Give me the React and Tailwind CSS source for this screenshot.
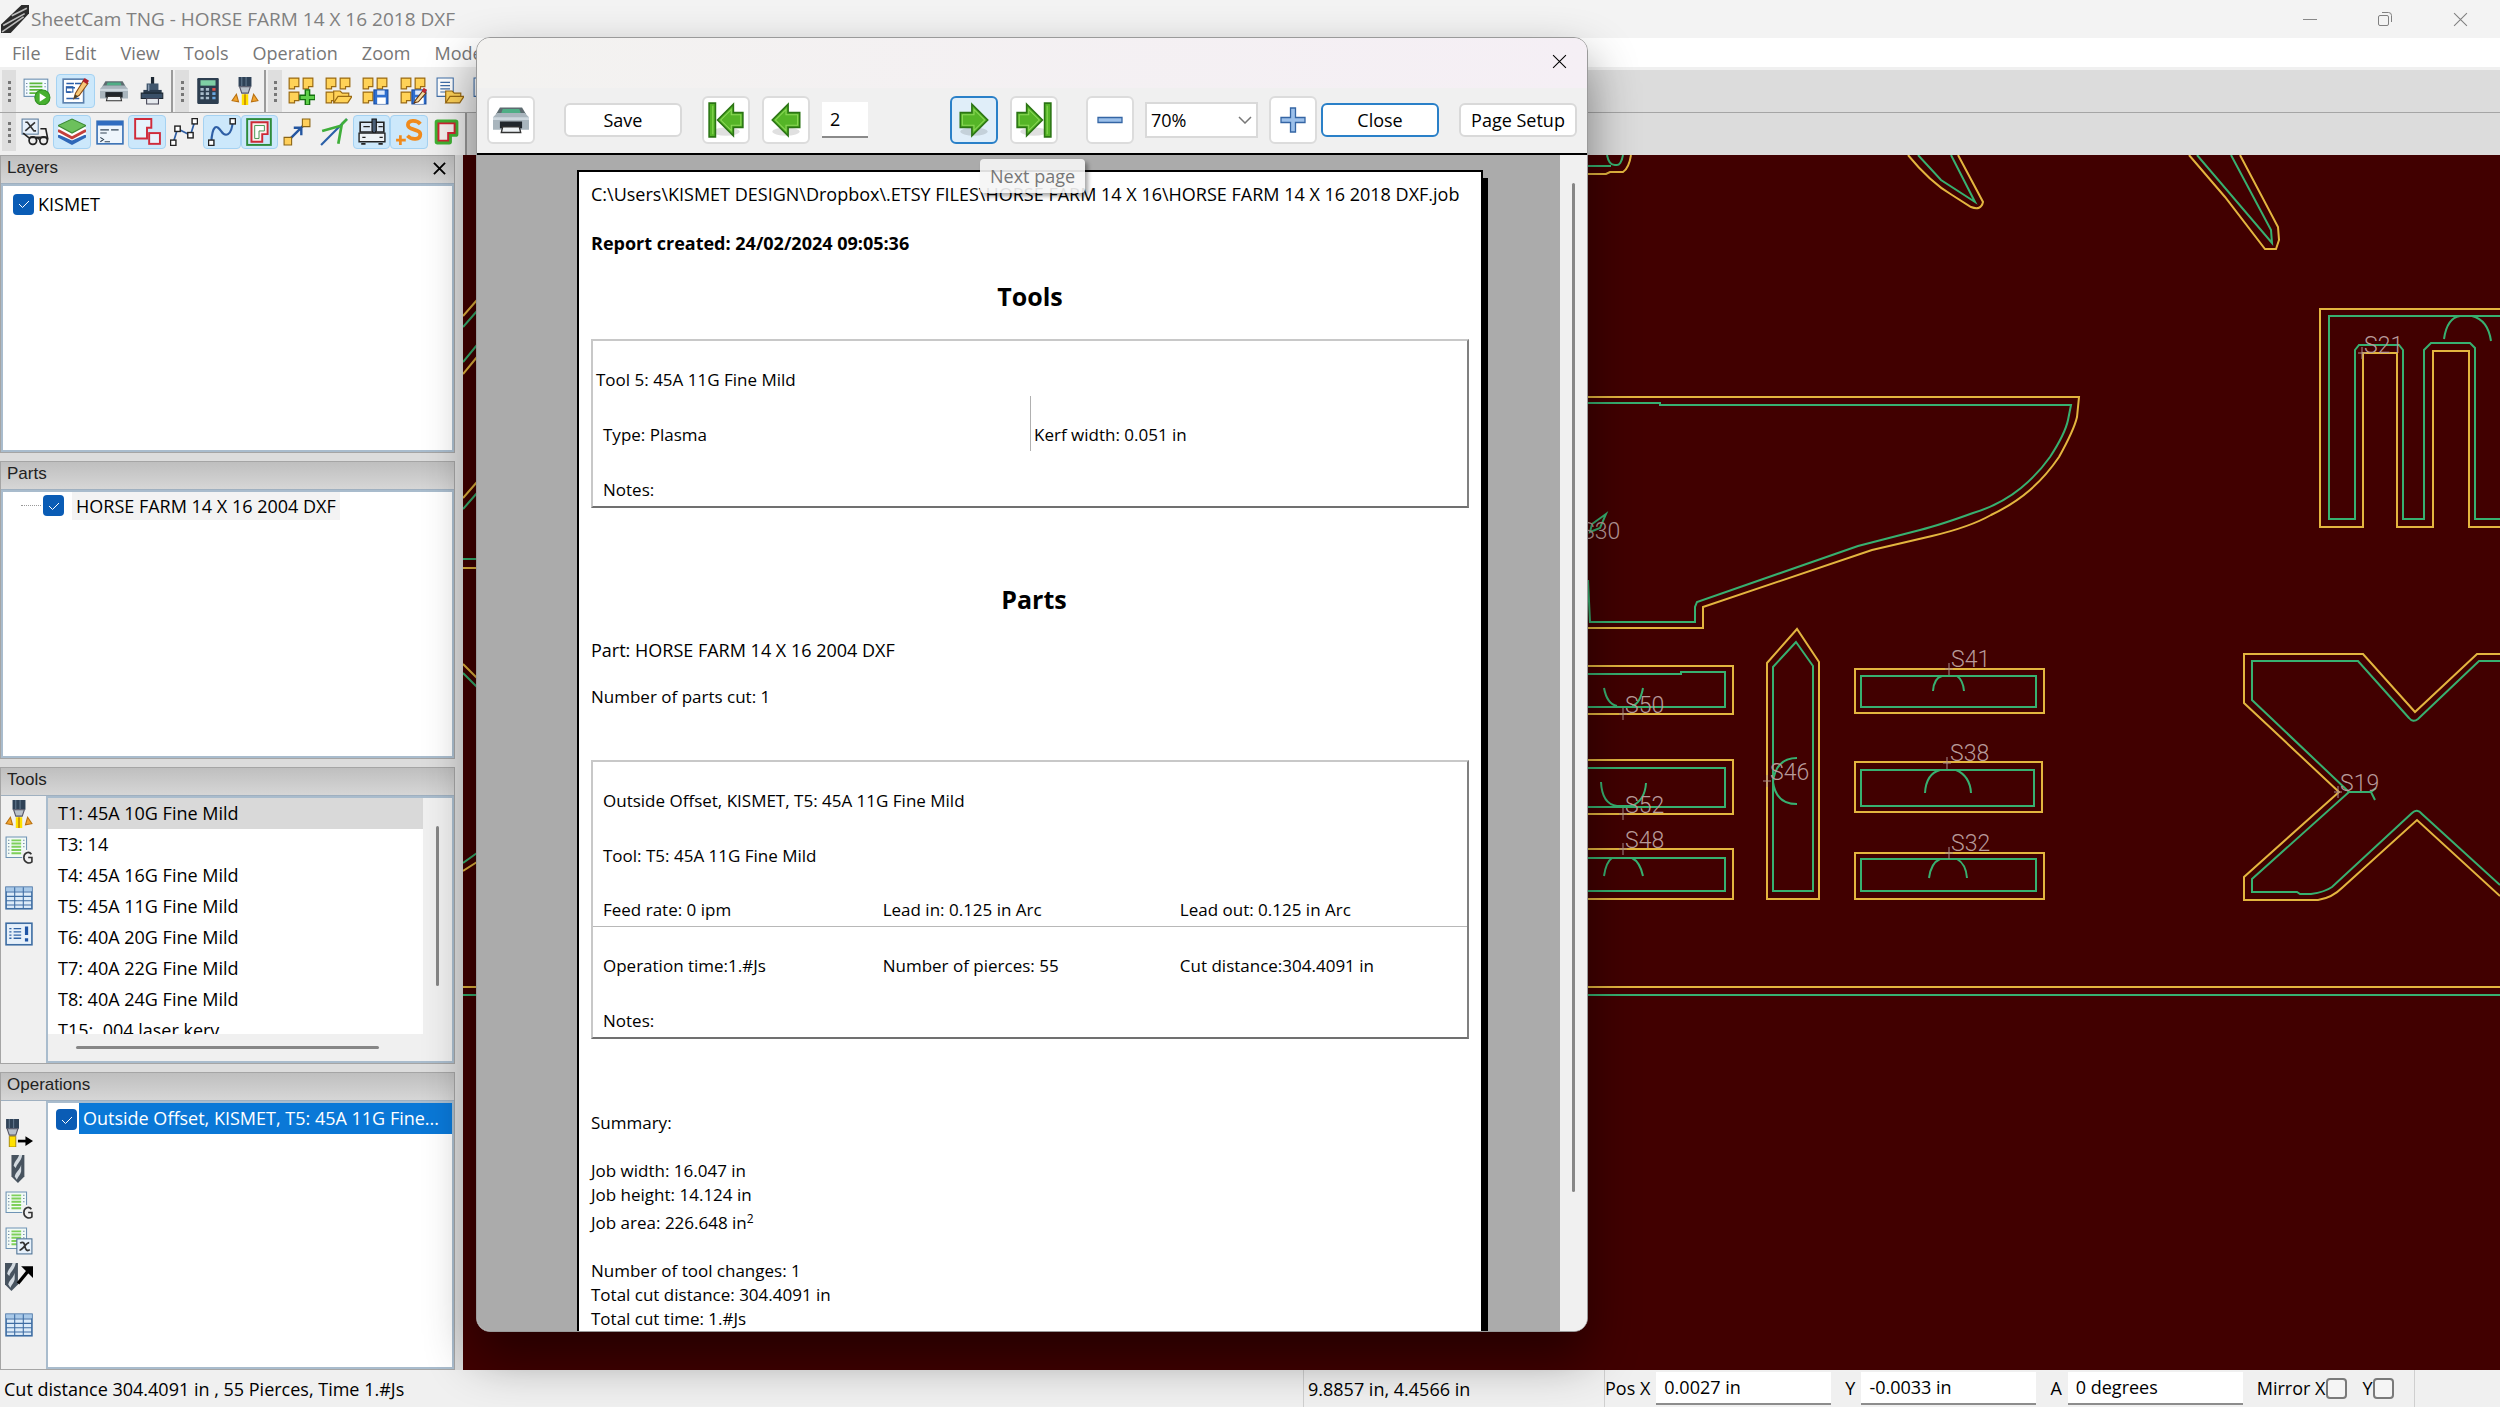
import React from "react";

const Icon = ({ children, className = "size-[28px]" }) => (
  <svg viewBox="0 0 26 26" className={className} fill="none" aria-hidden="true">
    {children}
  </svg>
);

/* ---------- icons ---------- */
const PostIcon = () => (
  <Icon>
    <rect x="1" y="2" width="22" height="16" fill="#f4fbff" stroke="#6b8fb0" />
    <path d="M6 6h12M6 9h12M6 12h12M6 15h8" stroke="#5cb83c" strokeWidth="1.6" />
    <path d="M3 6h1M3 9h1M3 12h1M3 15h1M20 6h1M20 9h1" stroke="#4a6a8a" />
    <circle cx="18" cy="19" r="7" fill="#46b02f" stroke="#2f8f20" />
    <path d="M15.500 15l6 4-6 4z" fill="#fff" />
  </Icon>
);
const EditIcon = () => (
  <Icon>
    <rect x="2" y="2" width="19" height="22" fill="#fff" stroke="#5b80ad" strokeWidth="1.500" />
    <path d="M5 6h7M13 6h6M5 14h4M5 20h12M5 10h8" stroke="#2a5ea8" strokeWidth="1.500" />
    <rect x="5" y="9" width="6" height="5" stroke="#2a5ea8" />
    <path d="M12 20l1.500-5L21 3l4 3-8 11z" fill="#f7c878" stroke="#8a4a10" />
    <path d="M20 4l2-3 4 2.500-2 3z" fill="#b3202c" />
    <path d="M12 20l1-4 3 2z" fill="#443" />
  </Icon>
);
const PrinterIcon = ({ className }) => (
  <Icon className={className}>
    <path d="M5 4h16l3 5H2z" fill="#5d6b70" />
    <path d="M7 5h12l1 3H6z" fill="#4fae86" />
    <path d="M3 8h20l3 3v9H0v-9z" fill="#a9b5bd" />
    <path d="M0 11h26v2H0z" fill="#cdd7de" />
    <path d="M5 14h16v5H5z" fill="#20262c" />
    <path d="M7 18h12l1 4H6z" fill="#eef2f5" stroke="#333" />
  </Icon>
);
const PlugIcon = () => (
  <Icon>
    <path d="M12 0h3v7h-3z" fill="#1d2833" />
    <path d="M8 6h11v7H8z" fill="#40566d" />
    <path d="M5 12h17v4H5z" fill="#2b3c4e" />
    <path d="M3 15h20v5H3z" fill="#3a5068" stroke="#1d2833" />
    <path d="M8 20h11v5H8z" fill="#e5e9ee" stroke="#445" />
    <path d="M10 7v6" stroke="#9fb2c6" />
  </Icon>
);
const CalcIcon = () => (
  <Icon>
    <rect x="3" y="1" width="20" height="24" rx="1" fill="#2d3e50" />
    <rect x="6" y="3" width="14" height="5" fill="#7fd0a5" />
    <path d="M6 11.500h3M11 11.500h3M6 15.500h3M11 15.500h3M6 19.500h3M11 19.500h3" stroke="#a9bccb" strokeWidth="2.500" />
    <path d="M17 11.500h3" stroke="#e0514b" strokeWidth="2.500" />
    <path d="M17 15.500h3M17 19.500h3" stroke="#6aa7e0" strokeWidth="2.500" />
  </Icon>
);
const TorchIcon = () => (
  <Icon>
    <path d="M7 0h12v9H7z" fill="#2f4257" />
    <path d="M10 0v9M14 0v9" stroke="#62788e" />
    <path d="M8 9h10l-2 6h-6z" fill="#b9c1ca" stroke="#556" />
    <path d="M10 16h6v10h-6z" fill="#ffe100" />
    <path d="M13 16v10" stroke="#c88a00" strokeWidth="1.500" />
    <path d="M5 16l2 7-6-1z" fill="#f3a52e" stroke="#b87010" />
    <path d="M21 16l-2 7 6-1z" fill="#f3a52e" stroke="#b87010" />
  </Icon>
);
const Tiles = ({ three }) => (
  <g fill="#ffd257" stroke="#9a6a12" strokeWidth="1.100">
    <path d="M2 1h9v8H7v2H2z" />
    <path d="M15 1h9v8h-4v2h-5z" />
    <path d="M2 14h9v8H7v2H2z" />
    {!three && <path d="M15 14h9v8h-4v2h-5z" />}
  </g>
);
const Folder = () => (
  <g fill="#ffd257" stroke="#9a6a12" strokeWidth="1.100">
    <path d="M9 24V13h6l2 2h6v4" />
    <path d="M9 24l4-6h13l-4 6z" />
  </g>
);
const Disk = () => (
  <g>
    <rect x="12" y="12" width="13" height="13" fill="#2e6fd0" stroke="#174a9c" />
    <path d="M15 12.500h7v4h-7z" fill="#dce9fb" />
    <path d="M15 19h8v6h-8z" fill="#fff" />
  </g>
);
const PartNewIcon = () => (
  <Icon>
    <Tiles three />
    <path d="M17 12h4v5h5v4h-5v5h-4v-5h-5v-4h5z" fill="#5fd04a" stroke="#14700f" strokeWidth="1.300" />
  </Icon>
);
const PartOpenIcon = () => (<Icon><Tiles three /><Folder /></Icon>);
const PartSaveIcon = () => (<Icon><Tiles three /><Disk /></Icon>);
const PartSaveAsIcon = () => (
  <Icon>
    <Tiles three />
    <Disk />
    <path d="M15 22l7-9 3 2-7 8-4 1z" fill="#f5dca0" stroke="#6b3a10" />
    <path d="M21 13l2-3 3 2-2 3z" fill="#c02a34" />
  </Icon>
);
const DocOpenIcon = () => (
  <Icon>
    <path d="M1 1h15v17H1z" fill="#fff" stroke="#3f6ea8" />
    <path d="M4 5h9M4 8h9M4 11h9M4 14h5" stroke="#3f6ea8" />
    <Folder />
  </Icon>
);
const GlassesIcon = () => (
  <Icon>
    <rect x="1" y="1" width="15" height="14" fill="#e7f0fa" stroke="#5f7f9f" />
    <path d="M4 4h2l6 8h2M13 4l-9 8" stroke="#333" strokeWidth="1.500" />
    <circle cx="11" cy="21" r="3.500" stroke="#222" strokeWidth="1.600" />
    <circle cx="21" cy="21" r="3.500" stroke="#222" strokeWidth="1.600" />
    <path d="M2 14l6 5M18 10h5l2 10M14 20c1-2 2-2 3 0M8 18h16" stroke="#222" strokeWidth="1.500" />
  </Icon>
);
const LayersIcon = () => (
  <Icon>
    <path d="M0 16l13-6 13 6v2l-13 7-13-7z" fill="#2f68b8" />
    <path d="M0 14l13-6 13 6v1l-13 6-13-6z" fill="#fff" />
    <path d="M0 11l13-6 13 6v2l-13 7-13-7z" fill="#c4403c" />
    <path d="M0 9l13-6 13 6v1l-13 7-13-7z" fill="#fff" />
    <path d="M0 7l13-6 13 6-13 7z" fill="#6cc05c" stroke="#3c8a34" />
  </Icon>
);
const ConsoleIcon = () => (
  <Icon>
    <rect x="1" y="3" width="24" height="21" fill="#eef5fc" stroke="#3970b5" strokeWidth="1.500" />
    <path d="M1 3h24v4H1z" fill="#2f6cc0" />
    <path d="M4 11h8M14 11h7M4 14h6M4 18l3 2-3 2M8 22h5" stroke="#345" />
  </Icon>
);
const ShapesIcon = () => (
  <Icon>
    <path d="M2 1h15v8h-4v10H2z" fill="#fff" fillOpacity=".5" stroke="#cf2b3b" strokeWidth="1.800" />
    <rect x="15" y="14" width="10" height="10" fill="#e8f2fd" stroke="#cf2b3b" strokeWidth="1.800" />
  </Icon>
);
const Nodes = ({ pts }) => pts.map(([x, y]) => (
  <rect key={`${x}-${y}`} x={x - 2.5} y={y - 2.5} width="5" height="5" fill="#fff" stroke="#222" strokeWidth="1.300" />
));
const PolylineIcon = () => (
  <Icon>
    <path d="M3 23L7 10l12 6 4-13" stroke="#2f5fa5" strokeWidth="1.600" />
    <Nodes pts={[[3, 23], [7, 10], [19, 16], [23, 3]]} />
  </Icon>
);
const CurveIcon = () => (
  <Icon>
    <path d="M3 23C4 6 8 6 12 12s10 5 11-9" stroke="#2f5fa5" strokeWidth="2" />
    <Nodes pts={[[3, 23], [23, 3]]} />
  </Icon>
);
const OffsetIcon = () => (
  <Icon>
    <rect x="2" y="1" width="22" height="24" stroke="#2d8c3c" strokeWidth="1.800" />
    <path d="M6 4h15v11h-5v7H6z" fill="#fdeeee" stroke="#cc2936" strokeWidth="1.800" />
    <path d="M9 7h9v5h-5v7H9z" fill="#fff" stroke="#2d8c3c" strokeWidth=".8" />
  </Icon>
);
const RapidIcon = () => (
  <Icon>
    <path d="M4 22L20 6M10 9l7 0v7" stroke="#2456a0" strokeWidth="2.200" />
    <path d="M1 18h7v7H1zM18 1h7v7h-7z" fill="#ffcf5a" stroke="#8a6414" />
  </Icon>
);
const DirectionIcon = () => (
  <Icon>
    <path d="M1 25L25 1" stroke="#2a5fa8" strokeWidth="2" />
    <path d="M2 12l18-5-3 17M20 6l5-5" stroke="#3fae3a" strokeWidth="2.500" />
  </Icon>
);
const MachineIcon = () => (
  <Icon>
    <path d="M2 4h22v9H2z" fill="#dce8f4" stroke="#222" strokeWidth="1.500" />
    <path d="M13 1v11l2 3 2-3V1z" fill="#4a5f78" stroke="#111" />
    <path d="M5 8h6M19 8h4" stroke="#222" />
    <path d="M1 14h24v8H1z" fill="#eef2f5" stroke="#222" strokeWidth="1.300" />
    <path d="M4 18h3M20 18h3" stroke="#222" strokeWidth="1.300" />
    <path d="M3 24h4M19 24h4" stroke="#222" strokeWidth="1.500" />
  </Icon>
);
const StartIcon = () => (
  <Icon>
    <path d="M5 16v9M1 20.500h9" stroke="#f08a1c" strokeWidth="2.500" />
    <path d="M23.500 5.500C20 1.500 12 1.500 12 6.500c0 5.500 11.500 3 11.500 8.500 0 5.500-8 5.500-12 1.500" stroke="#f08a1c" strokeWidth="3.500" />
  </Icon>
);
const KerfIcon = () => (
  <Icon>
    <path d="M5 4h17v11h-6v7H5z" fill="#2c8f23" stroke="#41b234" strokeWidth="5" strokeLinejoin="round" />
    <path d="M6 5h15v9h-6v7H6z" fill="#f5f0ee" stroke="#d02433" strokeWidth="1.800" />
  </Icon>
);
const CodeIcon = ({ letter }) => (
  <Icon>
    <path d="M1 1h19v19H1z" fill="#f2faf6" stroke="#6f94b5" />
    <path d="M6 4h9M6 7h9M6 10h9M6 13h9M6 16h9" stroke="#7ed05a" strokeWidth="1.700" />
    <path d="M3 4h1M3 7h1M3 10h1M3 13h1M3 16h1M17 4h1M17 7h1M17 10h1" stroke="#46658a" />
    {letter === "x" ? (
      <>
        <rect x="11" y="11" width="14" height="14" fill="#e7f1fb" stroke="#4f7396" />
        <path d="M14 15c3-2 4 0 4.500 3s2 5 4.500 3M22.500 14.500c-3 0-6 7-9 7" stroke="#333" strokeWidth="1.600" />
      </>
    ) : (
      <>
        <path d="M16 13h10v13H16z" fill="#f0f0f0" />
        <path d="M24.500 17c-2-3-7-2-7 3s5 6 7.500 4v-4h-3.500" stroke="#333" strokeWidth="1.500" />
      </>
    )}
  </Icon>
);
const TableIcon = () => (
  <Icon>
    <rect x="1" y="3" width="24" height="20" fill="#dcebf8" stroke="#3e6da3" strokeWidth="1.500" />
    <path d="M1 3h24v4H1z" fill="#a9c9e8" />
    <path d="M1 7.500h24M1 11.500h24M1 15.500h24M1 19.500h24M9 3v20M17 3v20" stroke="#3e6da3" />
  </Icon>
);
const InfoIcon = () => (
  <Icon>
    <rect x="1" y="3" width="24" height="20" fill="#e6f0fa" stroke="#3e6da3" strokeWidth="1.500" />
    <path d="M4 8h2M4 11h2M4 14h2M4 17h2M8 8h7M8 11h7M8 14h7M8 17h7" stroke="#2f62a5" strokeWidth="1.300" />
    <path d="M20 6v8M20 17v3" stroke="#1f55a5" strokeWidth="3" />
  </Icon>
);
const JetIcon = () => (
  <Icon>
    <path d="M1 0h12v9H1z" fill="#2f4257" />
    <path d="M4 0v9M8 0v9" stroke="#62788e" />
    <path d="M2 9h10l-2 6H4z" fill="#b9c1ca" stroke="#556" />
    <path d="M4 16h6v10H4z" fill="#ffe100" stroke="#a08000" strokeWidth=".8" />
    <path d="M12 20.500h9" stroke="#000" strokeWidth="2.500" />
    <path d="M19 16l7 4.500-7 4.500z" fill="#000" />
  </Icon>
);
const Drill = () => (
  <g>
    <path d="M0 0h12v20l-6 6-6-6z" fill="#47535f" />
    <path d="M2 10C3 5 6 4 7 0h3C9 6 5 8 4 12zM3 20c1-5 5-6 6-11v6c-1 4-3 5-4 8z" fill="#d3dae0" />
  </g>
);
const DrillIcon = () => (<Icon><g transform="translate(6 0)"><Drill /></g></Icon>);
const DrillMoveIcon = () => (
  <Icon>
    <Drill />
    <path d="M12 19L21 8" stroke="#000" strokeWidth="3" />
    <path d="M15 3h11v11z" fill="#000" />
  </Icon>
);
const LogoIcon = () => (
  <Icon>
    <path d="M0 18L19 0h7v8L9 26H0z" fill="#2c2c2c" />
    <path d="M2 19l20-11M1 25l20-14M10 10l14-7" stroke="#bdbdbd" strokeWidth="1.500" />
  </Icon>
);
const ArrowIcon = ({ flip, bar }) => (
  <svg viewBox="0 0 36 36" className="size-[38px]" fill="none" aria-hidden="true">
    <g transform={flip ? "translate(36 0) scale(-1 1)" : undefined}>
      <ellipse cx="18" cy="29" rx="13" ry="4" fill="#000" fillOpacity=".12" />
      {bar ? (
        <g fill="#55b527" stroke="#2b7414" strokeWidth="1.500">
          <path d="M2 11h9V3l15 15-15 15v-8H2z" />
          <path d="M28 2h6v32h-6z" />
          <path d="M4 13h9V8l10 10-10 10v-5H4zM30.500 4.500v27" stroke="#8cd858" strokeWidth="1" />
        </g>
      ) : (
        <g fill="#55b527" stroke="#2b7414" strokeWidth="1.500">
          <path d="M5 11h11V3l15 15-15 15v-8H5z" />
          <path d="M7 13h11V8l10 10-10 10v-5H7z" stroke="#8cd858" strokeWidth="1" />
        </g>
      )}
    </g>
  </svg>
);
const MinusIcon = () => (
  <Icon className="size-[26px]"><path d="M1 10.500h24v5H1z" fill="#9cc0ea" stroke="#3465a4" strokeWidth="1.300" /></Icon>
);
const PlusIcon = () => (
  <Icon className="size-[26px]">
    <path d="M10.500 1h5v9.500H25v5h-9.500V25h-5v-9.500H1v-5h9.500z" fill="#9cc0ea" stroke="#3465a4" strokeWidth="1.300" />
  </Icon>
);
const Cross = ({ className }) => (
  <svg viewBox="0 0 14 14" className={className} fill="none" stroke="currentColor" aria-hidden="true">
    <path d="M1 1l12 12M13 1L1 13" />
  </svg>
);

/* ---------- controls ---------- */
const ToolButton = ({ label, on, children }) => (
  <button
    aria-label={label}
    aria-pressed={on ? true : undefined}
    className={`grid h-[34px] min-w-0 flex-1 place-items-center rounded border ${on ? "border-[#a5d2f2] bg-[#cce8fb]" : "border-transparent"}`}
  >
    {children}
  </button>
);
const Grip = () => (
  <span className="flex w-[14px] flex-col items-center justify-center gap-[3px] self-stretch bg-[#dedede]">
    <i className="size-[3px] bg-[#777]" />
    <i className="size-[3px] bg-[#777]" />
    <i className="size-[3px] bg-[#777]" />
    <i className="size-[3px] bg-[#777]" />
  </span>
);
const Check = ({ id, label }) => (
  <span className="grid size-[21px] shrink-0 place-items-center">
    <input
      id={id}
      type="checkbox"
      defaultChecked
      aria-label={label}
      className="col-start-1 row-start-1 size-[21px] appearance-none rounded bg-[#0a5cb5]"
    />
    <svg viewBox="0 0 12 12" className="pointer-events-none col-start-1 row-start-1 size-[12px]" fill="none" stroke="#fff" aria-hidden="true">
      <path d="M1 6l3.500 3.500L11 3" />
    </svg>
  </span>
);
const Panel = ({ title, closable, children }) => (
  <section className="flex min-h-0 flex-col border border-[#a5a5a5]">
    <header className="flex h-[28px] shrink-0 items-start justify-between border-b border-[#9fb0c0] bg-gradient-to-b from-[#bfbfbf] to-[#d6d6d6] px-1.5">
      <h2 className="font-['Liberation_Sans',sans-serif] text-[17px] leading-[24px] text-[#222]">{title}</h2>
      {closable && (
        <button aria-label="Close panel" className="mt-1.5 mr-0.5 text-black">
          <Cross className="size-[13px] stroke-2" />
        </button>
      )}
    </header>
    {children}
  </section>
);
const listBox = "flex min-h-0 min-w-0 flex-1 border-2 border-[#a9bccd] bg-white";

const reportButton = "grid h-[48px] w-[48px] shrink-0 place-items-center rounded-md border-2 border-[#dcdcdc] bg-white";
const textButton = "h-[34px] w-[118px] shrink-0 rounded-md border-2 border-[#d9d9d9] bg-white text-[18px] leading-[24px] whitespace-nowrap text-black";

const tools = [
  "T1: 45A 10G Fine Mild", "T3: 14", "T4: 45A 16G Fine Mild", "T5: 45A 11G Fine Mild",
  "T6: 40A 20G Fine Mild", "T7: 40A 22G Fine Mild", "T8: 40A 24G Fine Mild", "T15: .004 laser kerv",
];
const menus = ["File", "Edit", "View", "Tools", "Operation", "Zoom", "Mode"];

/* ---------- drawing area ---------- */
const cutPaths = [
  "M1588 174H1606L1610 172H1623Q1629 168 1631 155",
  "M1908 155Q1930 182 1952 195L1971 207Q1981 211 1983 202L1974 185L1958 155",
  "M2189 155L2225 197L2265 249H2276L2279 240L2278 227L2240 155",
  "M2500 309H2320V527H2363V353H2397V527H2433V351H2469V527H2500",
  "M1588 397H2079L2077 417Q2074 430 2059 457Q2046 476 2030 490Q2014 504 1991 515Q1970 527 1932 536L1872 550L1703 607V628H1588",
  "M1588 666H1733V714H1588M1588 760H1733V814H1588M1588 849H1733V899H1588",
  "M1797 629L1767 663V899H1819V662Z",
  "M1855 669H2044V713H1855ZM1855 762H2042V812H1855ZM1855 853H2044V899H1855Z",
  "M2500 654H2477L2415 712L2363 654H2244V703L2339 792L2244 877V900H2318Q2332 898 2343 887L2417 820L2500 896",
  "M463 987H2500",
  "M463 316L477 300M463 374L477 357M463 498L477 482M463 568H477M463 664L477 678M463 871L477 862",
];
const toolPaths = [
  "M1588 166H1611M1607 155Q1609 166 1616 165Q1621 166 1623 155",
  "M1918 155L1941 180L1975 202L1951 155",
  "M2197 155L2272 243L2271 230L2231 155",
  "M2500 316H2329V519H2355V350L2359 345H2399L2403 350V519H2424V350L2431 343H2470L2475 348V519H2500",
  "M2444 339Q2447 318 2460 316H2472Q2488 320 2491 341",
  "M1588 403H1660V405H2071L2068 420Q2065 434 2050 457Q2038 474 2021 488Q2000 505 1973 513Q1940 525 1920 530L1858 546L1697 602L1695 607V622H1590L1588 580",
  "M1606 514L1592 524L1590 532L1600 528Z",
  "M1588 674H1681V672H1725V707H1588M1588 768H1725V807H1588M1588 858H1725V891H1588",
  "M1604 688Q1607 704 1617 706M1643 688Q1640 704 1632 706M1601 782Q1602 804 1617 806H1632Q1645 800 1646 783M1604 876Q1606 862 1612 858M1632 858Q1640 862 1643 876",
  "M1796 642L1773 667V891H1813V666Z",
  "M1797 758Q1776 758 1773 782Q1776 804 1797 804",
  "M1861 676H2036V707H1861ZM1861 770H2034V806H1861ZM1861 859H2036V891H1861Z",
  "M1933 691Q1934 678 1942 676M1957 676Q1963 680 1964 691M1925 793Q1926 774 1940 770H1956Q1970 776 1971 793M1929 878Q1931 863 1940 859M1957 859Q1966 864 1967 878",
  "M2500 661H2479L2418 719Q2413 723 2409 718L2358 661H2252V700L2349 792L2252 879V892H2297L2300 894H2311Q2325 892 2332 887L2412 813Q2417 808 2422 814L2500 885",
  "M2349 792H2371L2375 800M2371 792L2376 788",
  "M463 995H2500",
  "M463 327L477 311M463 362L477 345M463 509L477 493M463 559H477M463 673L477 687M463 863L477 853",
];
const starts = [
  ["S21", 2364, 353, 2362, 353], ["S30", 1581, 539, 1579, 541], ["S50", 1625, 713, 1623, 714],
  ["S52", 1625, 813, 1623, 814], ["S48", 1625, 848, 1623, 849], ["S46", 1770, 780, 1767, 781],
  ["S41", 1951, 667, 1949, 669], ["S38", 1950, 761, 1947, 763], ["S32", 1951, 851, 1949, 853],
  ["S19", 2340, 791, 2338, 792],
];

const Drawing = () => (
  <svg
    viewBox="463 155 2037 1215"
    preserveAspectRatio="xMinYMin slice"
    className="h-full w-full bg-[#410000]"
    fill="none"
    role="img"
    aria-label="Cutting paths"
  >
    <g stroke="#e3b53f" strokeWidth="2">
      {cutPaths.map((d) => <path key={d} d={d} />)}
    </g>
    <g stroke="#37b070" strokeWidth="2">
      {toolPaths.map((d) => <path key={d} d={d} />)}
    </g>
    {starts.map(([name, x, y, cx, cy]) => (
      <g key={name}>
        <text x={x} y={y} fontSize="23" fontWeight="300" fontFamily="Roboto, sans-serif" fill="#b79a9a">{name}</text>
        <path d={`M${cx} ${cy - 6}v12M${cx - 4} ${cy}h8`} stroke="#a88c8c" />
      </g>
    ))}
  </svg>
);

/* ---------- report preview ---------- */
const tableBox = "w-full border-separate border-spacing-0 border-2 border-t-[#c8c8c8] border-r-[#808080] border-b-[#707070] border-l-[#c8c8c8]";
const cell = "h-[55px] px-2.5 pb-1 text-left align-bottom font-normal";

const ReportPage = () => (
  <article className="mt-[15px] mr-[77px] ml-[100px] flex-1 border-2 border-b-0 border-black bg-white px-3 pt-2.5 text-[17px] leading-[24px] text-black shadow-[5px_8px_0_#000]">
    <p className="text-[18px] whitespace-nowrap">C:\Users\KISMET DESIGN\Dropbox\.ETSY FILES\HORSE FARM 14 X 16\HORSE FARM 14 X 16 2018 DXF.job</p>
    <p className="mt-[25px] text-[18px] font-bold">Report created: 24/02/2024 09:05:36</p>
    <h1 className="mt-[25px] text-center text-[25px] leading-[32px] font-bold">Tools</h1>
    <table className={`${tableBox} mt-[27px] table-fixed`}>
      <tbody>
        <tr><th colSpan={2} className="h-[55px] px-[3px] pb-1 text-left align-bottom font-normal">Tool 5: 45A 11G Fine Mild</th></tr>
        <tr><td className={cell}>Type: Plasma</td><td className="h-[55px] border-l border-[#b0b0b0] px-[3px] pb-1 align-bottom">Kerf width: 0.051 in</td></tr>
        <tr><td colSpan={2} className={cell}>Notes:</td></tr>
      </tbody>
    </table>
    <h1 className="mt-[75px] pl-2 text-center text-[25px] leading-[32px] font-bold">Parts</h1>
    <p className="mt-[23px] text-[18px]">Part: HORSE FARM 14 X 16 2004 DXF</p>
    <p className="mt-[23px]">Number of parts cut: 1</p>
    <table className={`${tableBox} mt-[51px] table-fixed`}>
      <colgroup><col className="w-[32%]" /><col className="w-[34%]" /><col className="w-[34%]" /></colgroup>
      <tbody>
        <tr><th colSpan={3} className={cell}>Outside Offset, KISMET, T5: 45A 11G Fine Mild</th></tr>
        <tr><td colSpan={3} className={cell}>Tool: T5: 45A 11G Fine Mild</td></tr>
        <tr>
          <td className={`${cell} border-b border-[#b8b8b8]`}>Feed rate: 0 ipm</td>
          <td className={`${cell} border-b border-[#b8b8b8]`}>Lead in: 0.125 in Arc</td>
          <td className={`${cell} border-b border-[#b8b8b8]`}>Lead out: 0.125 in Arc</td>
        </tr>
        <tr>
          <td className={cell}>Operation time:1.#Js</td>
          <td className={cell}>Number of pierces: 55</td>
          <td className={cell}>Cut distance:304.4091 in</td>
        </tr>
        <tr><td colSpan={3} className={cell}>Notes:</td></tr>
      </tbody>
    </table>
    <p className="mt-[72px]">Summary:</p>
    <p className="mt-6">Job width: 16.047 in</p>
    <p>Job height: 14.124 in</p>
    <p className="mt-1">Job area: 226.648 in<sup className="text-[12px] leading-none">2</sup></p>
    <p className="mt-6">Number of tool changes: 1</p>
    <p>Total cut distance: 304.4091 in</p>
    <p>Total cut time: 1.#Js</p>
  </article>
);

const ReportDialog = () => (
  <div
    role="dialog"
    aria-label="Report preview"
    className="absolute top-[37px] bottom-[75px] left-[476px] flex w-[1112px] flex-col overflow-hidden rounded-[14px] border border-[#9a9a9a] bg-[#f0f0f0] shadow-[0_24px_50px_rgba(0,0,0,0.45)]"
  >
    <header className="flex h-[50px] shrink-0 items-start justify-end bg-gradient-to-r from-[#f3f2f0] to-[#f5eff5] pt-4 pr-5">
      <button aria-label="Close window" className="text-black"><Cross className="size-[15px]" /></button>
    </header>
    <div className="flex h-[67px] shrink-0 items-center border-b-2 border-black pb-0.5 pl-2.5">
      <button aria-label="Print" className={reportButton}><PrinterIcon className="size-[36px]" /></button>
      <button className={`${textButton} ml-[29px]`}>Save</button>
      <div className="ml-5 flex items-center gap-3">
        <button aria-label="First page" className={reportButton}><ArrowIcon flip bar /></button>
        <button aria-label="Previous page" className={reportButton}><ArrowIcon flip /></button>
        <input aria-label="Page number" defaultValue="2" className="h-[36px] w-[46px] border-b-2 border-[#8a8a8a] bg-white px-2 text-[18px] text-black" />
      </div>
      <div className="ml-[82px] flex items-center gap-3">
        <button aria-label="Next page" className="grid h-[48px] w-[48px] shrink-0 place-items-center rounded-md border-2 border-[#2a80c8] bg-[#e0eef9]"><ArrowIcon /></button>
        <button aria-label="Last page" className={reportButton}><ArrowIcon bar /></button>
      </div>
      <div className="ml-7 flex items-center gap-[11px]">
        <button aria-label="Zoom out" className={reportButton}><MinusIcon /></button>
        <span className="grid w-[113px] items-center">
          <select aria-label="Zoom level" defaultValue="70%" className="col-start-1 row-start-1 h-[36px] appearance-none border-2 border-[#d9d9d9] bg-white px-1 text-[18px] text-black">
            <option>70%</option>
          </select>
          <svg viewBox="0 0 14 8" className="pointer-events-none col-start-1 row-start-1 mr-1.5 w-[14px] justify-self-end" fill="none" stroke="#777" strokeWidth="1.500" aria-hidden="true">
            <path d="M1 1l6 6 6-6" />
          </svg>
        </span>
        <button aria-label="Zoom in" className={reportButton}><PlusIcon /></button>
      </div>
      <button className="ml-1 h-[34px] w-[118px] shrink-0 rounded-md border-2 border-[#2a80c8] bg-white text-[18px] leading-[24px] text-black">Close</button>
      <button className={`${textButton} ml-5`}>Page Setup</button>
    </div>
    <div className="flex min-h-0 flex-1">
      <div className="flex min-w-0 flex-1 flex-col overflow-hidden bg-[#ababab]">
        <ReportPage />
      </div>
      <div className="flex w-[27px] justify-center bg-[#f0f0f0] pt-7">
        <span className="h-[1009px] w-[3px] rounded bg-[#868686]" />
      </div>
    </div>
    <div role="tooltip" className="absolute top-[121px] left-[503px] rounded-sm bg-[#f5f5f5]/90 px-2.5 py-1 text-[18px] leading-[26px] text-[#777] shadow-[3px_3px_4px_rgba(0,0,0,0.35)]">
      Next page
    </div>
  </div>
);

const statusInput = "ml-1.5 h-[33px] w-[175px] border-b-2 border-[#8d8d8d] bg-white px-2 text-[18px] text-black";
const mirrorBox = "size-[21px] appearance-none rounded border-2 border-[#7a7a7a] bg-[#f5f5f5]";

export default function App() {
  return (
    <div className="relative flex h-screen flex-col overflow-hidden bg-[#dcdcdc] font-['Open_Sans','Noto_Sans',sans-serif] text-[18px] leading-[24px] text-black">
      <header className="flex h-[38px] shrink-0 items-center bg-[#f3f3f3] pl-px text-[#808080]">
        <LogoIcon />
        <h1 className="ml-0.5 text-[19px]">SheetCam TNG - HORSE FARM 14 X 16 2018 DXF</h1>
        <div className="mr-8 ml-auto flex items-center gap-[61px]">
          <button aria-label="Minimize" className="h-[14px] w-[14px]"><span className="block h-px w-full bg-[#888]" /></button>
          <button aria-label="Restore">
            <svg viewBox="0 0 14 14" className="size-[14px]" fill="none" stroke="currentColor" aria-hidden="true">
              <rect x=".5" y="3.500" width="10" height="10" rx="1.500" />
              <path d="M4 .5h6.500a3 3 0 013 3V10" />
            </svg>
          </button>
          <button aria-label="Close"><Cross className="size-[15px]" /></button>
        </div>
      </header>

      <nav className="flex h-[32px] shrink-0 items-center gap-6 border-b-[3px] border-[#f0f0f0] bg-white pl-3 text-[#777]">
        {menus.map((m) => <button key={m}>{m}</button>)}
      </nav>

      <div className="flex h-[43px] shrink-0 border-b border-[#a5a5a5]" role="toolbar" aria-label="File tools">
        <div className="flex w-[173px] items-center border-r-2 border-[#9b9b9b] bg-[#f0f0f0] pl-0.5">
          <Grip />
          <div className="flex min-w-0 flex-1 pl-0.5">
            <ToolButton label="Run post"><PostIcon /></ToolButton>
            <ToolButton label="Edit job options" on><EditIcon /></ToolButton>
            <ToolButton label="Print"><PrinterIcon /></ToolButton>
            <ToolButton label="Machine"><PlugIcon /></ToolButton>
          </div>
        </div>
        <div className="flex w-[93px] items-center border-r-2 border-[#9b9b9b] bg-[#f0f0f0] pl-0.5">
          <Grip />
          <ToolButton label="Calculator"><CalcIcon /></ToolButton>
          <ToolButton label="Plasma tool"><TorchIcon /></ToolButton>
        </div>
        <div className="flex w-[240px] items-center bg-[#f0f0f0] pl-0.5">
          <Grip />
          <ToolButton label="New part"><PartNewIcon /></ToolButton>
          <ToolButton label="Open part"><PartOpenIcon /></ToolButton>
          <ToolButton label="Save part"><PartSaveIcon /></ToolButton>
          <ToolButton label="Save part as"><PartSaveAsIcon /></ToolButton>
          <ToolButton label="Open drawing"><DocOpenIcon /></ToolButton>
          <ToolButton label="Open code"><DocOpenIcon /></ToolButton>
        </div>
      </div>

      <div className="flex h-[42px] shrink-0" role="toolbar" aria-label="View tools">
        <div className="flex w-[467px] items-center border-r-2 border-[#9b9b9b] bg-[#f0f0f0] pb-1 pl-0.5">
          <Grip />
          <ToolButton label="Variables"><GlassesIcon /></ToolButton>
          <ToolButton label="Show layers" on><LayersIcon /></ToolButton>
          <ToolButton label="Console"><ConsoleIcon /></ToolButton>
          <ToolButton label="Show parts" on><ShapesIcon /></ToolButton>
          <ToolButton label="Show nodes"><PolylineIcon /></ToolButton>
          <ToolButton label="Show curves" on><CurveIcon /></ToolButton>
          <ToolButton label="Show offsets" on><OffsetIcon /></ToolButton>
          <ToolButton label="Show rapids"><RapidIcon /></ToolButton>
          <ToolButton label="Show directions"><DirectionIcon /></ToolButton>
          <ToolButton label="Show machine" on><MachineIcon /></ToolButton>
          <ToolButton label="Show start points" on><StartIcon /></ToolButton>
          <ToolButton label="Show kerf"><KerfIcon /></ToolButton>
        </div>
      </div>

      <main className="flex min-h-0 flex-1">
        <aside className="mr-2 grid w-[455px] shrink-0 grid-rows-4 gap-2">
          <Panel title="Layers" closable>
            <div className={`${listBox} items-start px-2.5 pt-1.5`}>
              <label htmlFor="layer-kismet" className="flex items-center gap-1"><Check id="layer-kismet" />KISMET</label>
            </div>
          </Panel>
          <Panel title="Parts">
            <div className={`${listBox} items-start px-1`}>
              <label htmlFor="part-horse" className="flex items-center pl-3.5">
                <span className="w-[20px] border-t border-dotted border-[#999]" />
                <span className="ml-0.5"><Check id="part-horse" /></span>
                <span className="ml-2 bg-[#f3f3f3] px-1 leading-[28px]">HORSE FARM 14 X 16 2004 DXF</span>
              </label>
            </div>
          </Panel>
          <Panel title="Tools">
            <div className="flex min-h-0 flex-1">
              <div className="flex w-[45px] shrink-0 flex-col items-start gap-2 bg-[#f0f0f0] pt-1 pl-1">
                <button aria-label="New plasma tool"><TorchIcon /></button>
                <button aria-label="New code tool"><CodeIcon letter="G" /></button>
                <button aria-label="Tool table" className="mt-3"><TableIcon /></button>
                <button aria-label="Tool info"><InfoIcon /></button>
              </div>
              <div className={listBox}>
                <div className="flex min-w-0 flex-1 flex-col">
                  <ul className="min-h-0 flex-1 overflow-hidden">
                    {tools.map((t, i) => (
                      <li key={t} className={`h-[31px] pl-2.5 leading-[31px] ${i === 0 ? "bg-[#d9d9d9]" : ""}`}>{t}</li>
                    ))}
                  </ul>
                  <div className="flex h-[27px] shrink-0 items-center bg-[#f0f0f0] pr-[44px] pl-[28px]">
                    <span className="h-[3px] flex-1 rounded bg-[#868686]" />
                  </div>
                </div>
                <div className="flex w-[29px] shrink-0 justify-center bg-[#f0f0f0] pt-[28px]">
                  <span className="h-[160px] w-[3px] rounded bg-[#868686]" />
                </div>
              </div>
            </div>
          </Panel>
          <Panel title="Operations">
            <div className="flex min-h-0 flex-1">
              <div className="flex w-[45px] shrink-0 flex-col items-start gap-2 bg-[#f0f0f0] pt-[18px] pl-1">
                <button aria-label="Jet cutting"><JetIcon /></button>
                <button aria-label="Drilling"><DrillIcon /></button>
                <button aria-label="Insert code"><CodeIcon letter="G" /></button>
                <button aria-label="Set variable"><CodeIcon letter="x" /></button>
                <button aria-label="Move operation"><DrillMoveIcon /></button>
                <button aria-label="Operation table" className="mt-3"><TableIcon /></button>
              </div>
              <div className={`${listBox} items-start pl-2`}>
                <span className="pt-1.5"><Check id="op-outside" label="Enable operation" /></span>
                <label htmlFor="op-outside" className="ml-0.5 min-w-0 flex-1 truncate bg-[#0a78d7] pl-1 leading-[31px] text-white">
                  Outside Offset, KISMET, T5: 45A 11G Fine...
                </label>
              </div>
            </div>
          </Panel>
        </aside>
        <div className="min-w-0 flex-1"><Drawing /></div>
      </main>

      <footer className="flex h-[37px] shrink-0 items-stretch bg-[#f0f0f0] leading-[39px]">
        <p className="min-w-0 flex-1 truncate pl-1">Cut distance 304.4091 in , 55 Pierces, Time 1.#Js</p>
        <p className="w-[301px] border-l border-[#cfcfcf] pl-1">9.8857 in, 4.4566 in</p>
        <div className="flex w-[811px] items-center border-x border-[#cfcfcf]">
          <label htmlFor="pos-x">Pos X</label>
          <input id="pos-x" defaultValue="0.0027 in" className={statusInput} />
          <label htmlFor="pos-y" className="ml-3.5">Y</label>
          <input id="pos-y" defaultValue="-0.0033 in" className={statusInput} />
          <label htmlFor="pos-a" className="ml-3.5">A</label>
          <input id="pos-a" defaultValue="0 degrees" className={statusInput} />
          <label htmlFor="mirror-x" className="ml-3.5">Mirror X</label>
          <input id="mirror-x" type="checkbox" className={mirrorBox} />
          <label htmlFor="mirror-y" className="ml-4">Y</label>
          <input id="mirror-y" type="checkbox" className={mirrorBox} />
        </div>
        <span className="w-[85px]" />
      </footer>

      <ReportDialog />
    </div>
  );
}
